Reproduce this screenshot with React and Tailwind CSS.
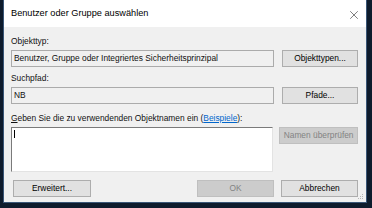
import { X } from 'lucide-react';

function Btn({ children, className = '', disabled = false }) {
  return (
    <button
      className={`flex items-center justify-center h-[17px] border text-[8.4px] leading-none ${
        disabled ? 'bg-[#cccccc] border-[#bfbfbf] text-[#838383]' : 'bg-[#e1e1e1] border-[#adadad] text-black'
      } ${className}`}
    >
      {children}
    </button>
  );
}

function Grip() {
  return (
    <svg width="6" height="6" viewBox="0 0 6 6" className="absolute right-[2px] bottom-[2px]">
      <rect x="4" y="0" width="1" height="1" fill="#b5b5b5" />
      <rect x="2" y="2" width="1" height="1" fill="#b5b5b5" />
      <rect x="4" y="2" width="1" height="1" fill="#b5b5b5" />
      <rect x="0" y="4" width="1" height="1" fill="#b5b5b5" />
      <rect x="2" y="4" width="1" height="1" fill="#b5b5b5" />
      <rect x="4" y="4" width="1" height="1" fill="#b5b5b5" />
    </svg>
  );
}

export default function App() {
  return (
    <div
      className="w-[372px] h-[208px] bg-[#0e1b2c] pl-[3px] overflow-hidden"
      style={{ fontFamily: '"Liberation Sans", Arial, sans-serif' }}
    >
      <div className="relative w-[364px] h-[203px] border border-t-0 border-[#3a5677] flex flex-col bg-[#f0f0f0]">
        {/* title bar */}
        <div className="h-[27px] bg-white flex items-center pl-[7px] pr-[5px]">
          <span className="text-[9.2px] text-black flex-1 pt-[1px]">Benutzer oder Gruppe auswählen</span>
          <X className="w-[14px] h-[14px] text-[#222] mt-[3px]" strokeWidth={1} />
        </div>

        {/* body */}
        <div className="flex flex-col pl-[7px] pr-[8px] pt-[9px] text-[8.4px] text-[#111]">
          <div className="h-[11px] leading-[11px]">Objekttyp:</div>
          <div className="flex gap-[8px] mt-[3px]">
            <div className="w-[263px] h-[17px] border border-[#ababab] flex items-center px-[2px] leading-none">
              Benutzer, Gruppe oder Integriertes Sicherheitsprinzipal
            </div>
            <Btn className="w-[76px]">Objekttypen...</Btn>
          </div>

          <div className="h-[11px] leading-[11px] mt-[6px]">Suchpfad:</div>
          <div className="flex gap-[8px] mt-[3px]">
            <div className="w-[263px] h-[17px] border border-[#ababab] flex items-center px-[2px] leading-none">NB</div>
            <Btn className="w-[76px]">Pfade...</Btn>
          </div>

          <div className="h-[11px] leading-[11px] mt-[9px]">
            <span className="underline underline-offset-1">G</span>eben Sie die zu verwendenden Objektnamen ein (
            <span className="text-[#0066cc] underline underline-offset-1">Beispiele</span>):
          </div>
          <div className="flex gap-[6px] mt-[3px]">
            <div className="relative w-[263px] h-[45px] bg-white border border-t-[#7a7a7a] border-l-[#7a7a7a] border-r-[#e3e3e3] border-b-[#e3e3e3]">
              <div className="absolute left-[2px] top-[2px] w-px h-[8px] bg-black" />
            </div>
            <Btn disabled className="w-[79px]">Namen überprüfen</Btn>
          </div>

          <div className="flex mt-[8px]">
            <Btn className="w-[78px] ml-[2px]">Erweitert...</Btn>
            <div className="flex-1" />
            <Btn disabled className="w-[77px]">OK</Btn>
            <Btn className="w-[77px] ml-[7px]">Abbrechen</Btn>
          </div>
        </div>
        <Grip />
      </div>
    </div>
  );
}
